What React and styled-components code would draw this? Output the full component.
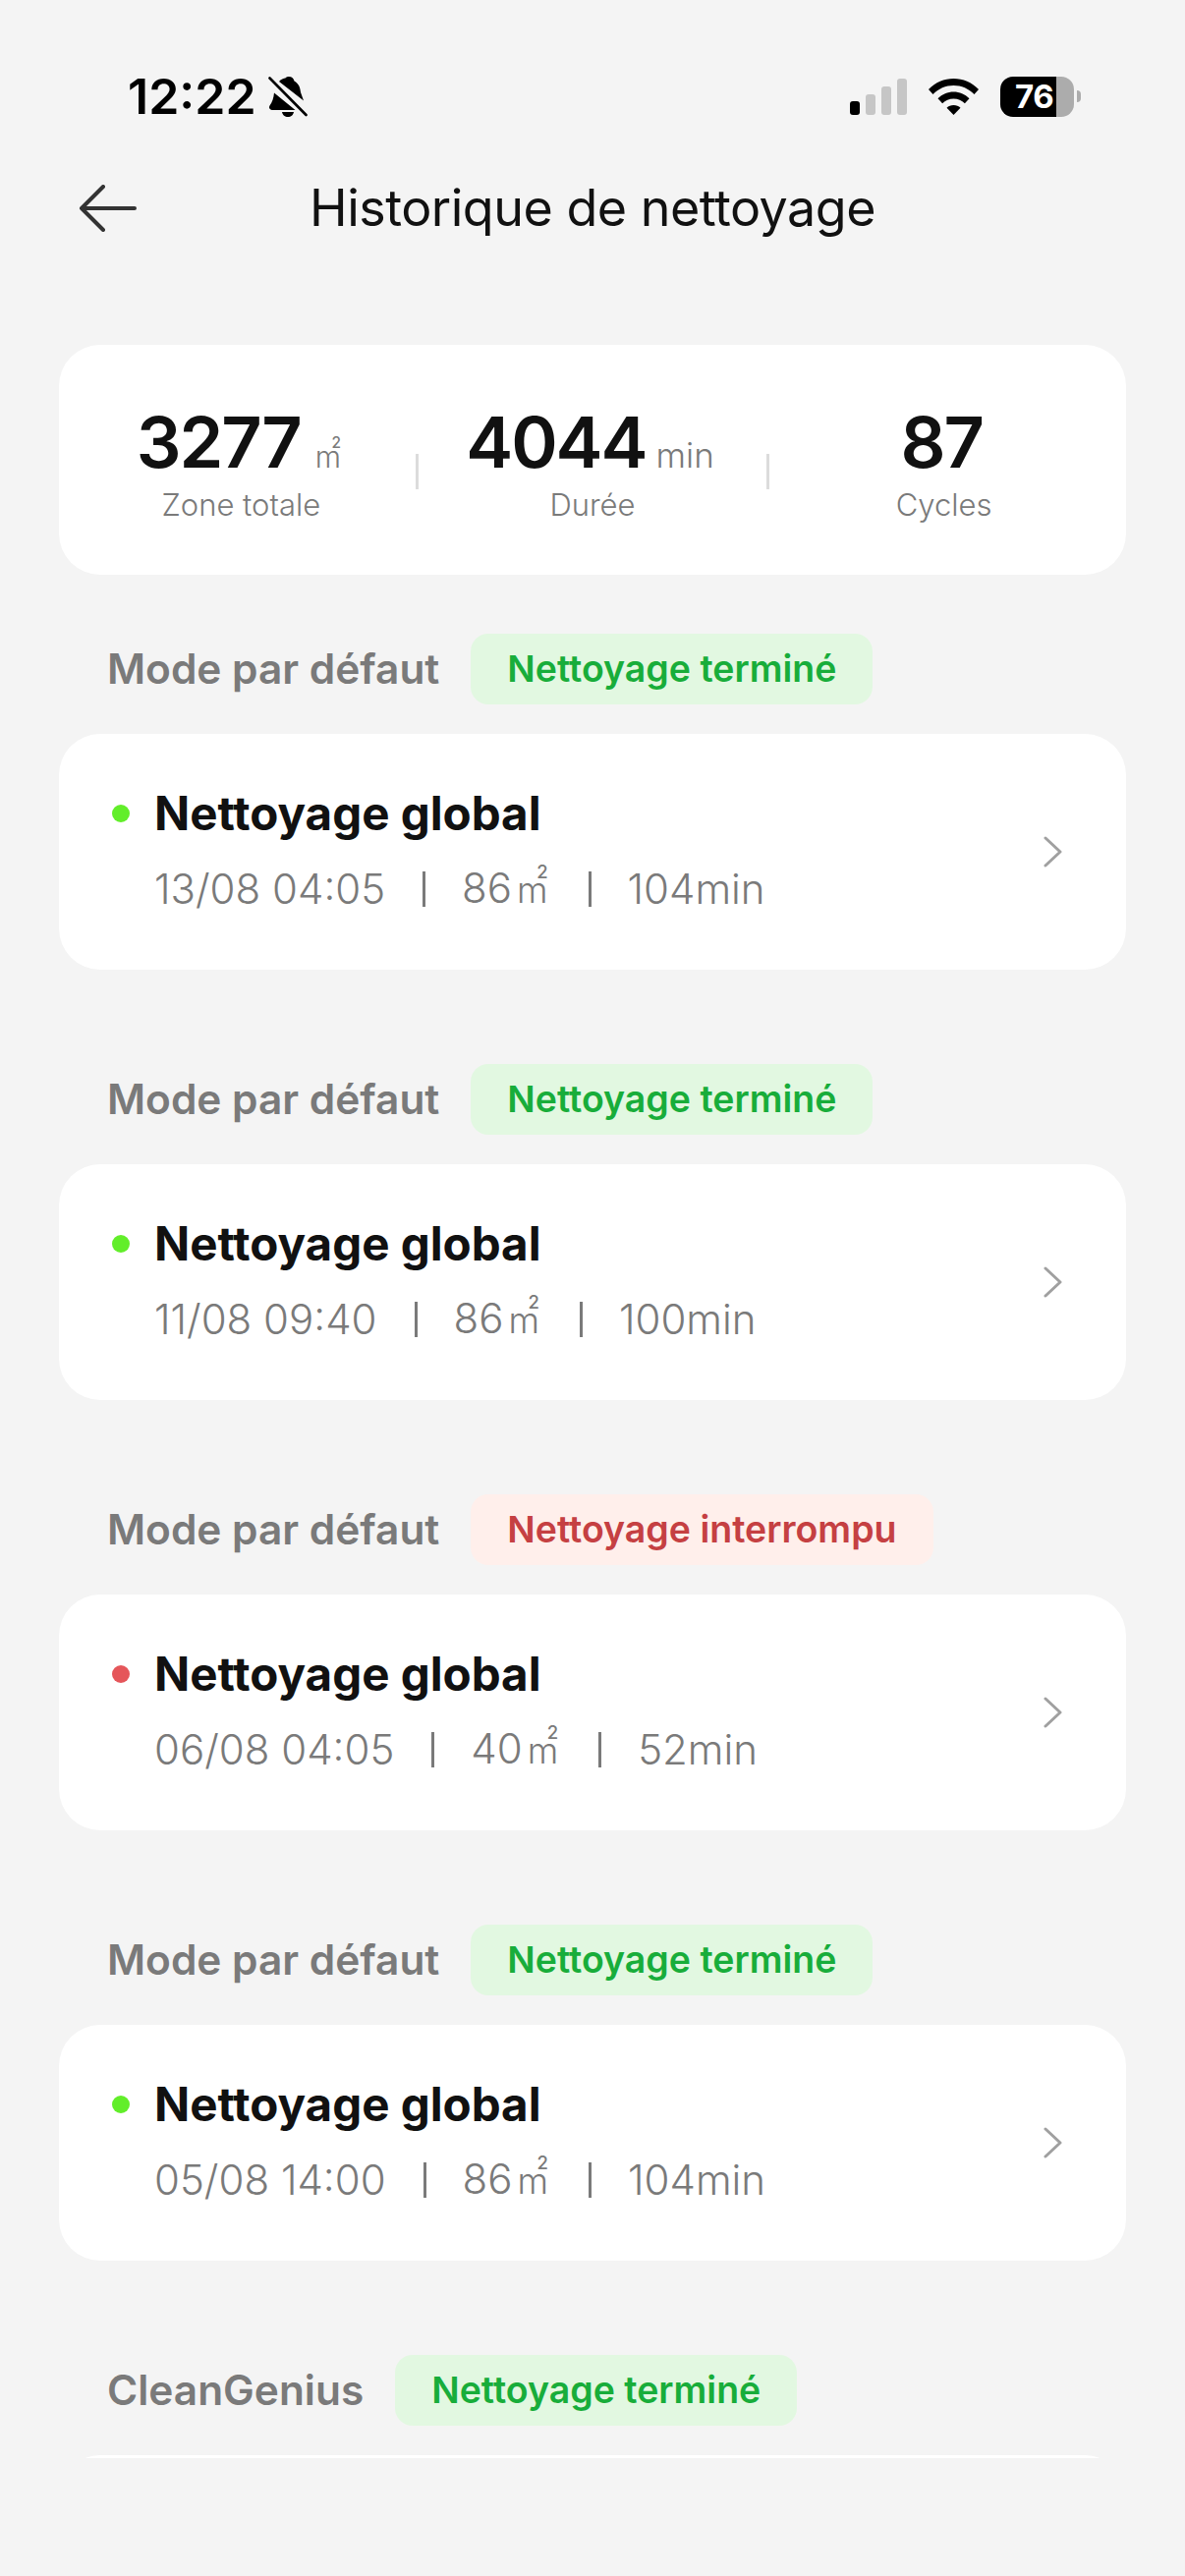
import styled, { createGlobalStyle } from "styled-components";

const GlobalStyle = createGlobalStyle`
  html, body {
    margin: 0;
    padding: 0;
    background: #f4f4f4;
  }
  body {
    font-family: Inter, "Noto Sans", sans-serif;
    color: #111111;
  }
`;

const Page = styled.div`
  width: 1206px;
  height: 2622px;
  overflow: hidden;
  display: flex;
  flex-direction: column;
  padding-top: 70px;
  box-sizing: border-box;
`;

const StatusBar = styled.div`
  height: 56px;
  display: flex;
  align-items: center;
  justify-content: space-between;
  padding: 0 106px 0 130px;
`;

const StatusLeft = styled.div`
  display: flex;
  align-items: center;
  gap: 12px;
`;

const StatusRight = styled.div`
  display: flex;
  align-items: center;
`;

const Time = styled.span`
  font-size: 50px;
  font-weight: 600;
  line-height: 56px;
  color: #000;
`;

const Signal = styled.div`
  display: flex;
  align-items: flex-end;
  gap: 6px;
  height: 37px;
  margin-right: 22px;
`;

const SignalBar = styled.i`
  width: 10px;
  height: ${(p) => p.$h}px;
  border-radius: 3px;
  background: ${(p) => (p.$on ? "#000" : "#c6c6c6")};
`;

const Battery = styled.div`
  width: 75px;
  height: 41px;
  margin-left: 22px;
  border-radius: 13px;
  background: linear-gradient(
    to right,
    #000 ${(p) => p.$level}%,
    #acacac ${(p) => p.$level}%
  );
  color: #fff;
  font-size: 33px;
  font-weight: 700;
  line-height: 41px;
  padding-left: 15px;
  box-sizing: border-box;
  letter-spacing: -0.5px;
`;

const BatteryCap = styled.i`
  width: 4px;
  height: 12px;
  margin-left: 3px;
  border-radius: 0 4px 4px 0;
  background: #acacac;
`;

const Header = styled.header`
  height: 100px;
  margin-top: 36px;
  display: grid;
  grid-template-columns: 1fr auto 1fr;
  align-items: center;
  padding-left: 80px;
  padding-right: 80px;
`;

const Title = styled.h1`
  margin: 0;
  font-size: 52px;
  font-weight: 400;
  line-height: 60px;
  letter-spacing: -0.5px;
  color: #111;
`;

const StatsCard = styled.section`
  margin: 89px 60px 0;
  height: 234px;
  background: #fff;
  border-radius: 42px;
  display: flex;
  align-items: center;
  padding: 0 8px;
  box-sizing: border-box;
`;

const Stat = styled.div`
  flex: 1;
  display: flex;
  flex-direction: column;
  align-items: center;
  gap: 4px;
  padding-top: 2px;
`;

const StatValue = styled.div`
  font-size: 72px;
  font-weight: 600;
  line-height: 86px;
  letter-spacing: -2px;
  display: flex;
  align-items: baseline;
  gap: 10px;
  padding-right: 5px;
  color: #111;
`;

const StatUnit = styled.span`
  font-size: 35px;
  font-weight: 300;
  line-height: 1;
  letter-spacing: 0;
  color: #7a7a7a;
`;

const StatLabel = styled.div`
  font-size: 31px;
  line-height: 34px;
  font-weight: 300;
  color: #7a7a7a;
`;

const StatDivider = styled.i`
  width: 3px;
  height: 36px;
  margin-top: 24px;
  background: #dcdcdc;
`;

const Metre = styled.span`
  font-size: 0.86em;
  margin-left: 5px;
`;

// small 2 set over the right end of the m
const Squared = styled.span`
  position: relative;
  top: -1.3em;
  margin-left: -0.62em;
  font-size: 0.44em;
  font-weight: 500;
  line-height: 0;
`;

const Section = styled.section`
  margin-top: ${(p) => p.$gap}px;
`;

const SectionHead = styled.div`
  height: 72px;
  padding-left: 109px;
  display: flex;
  align-items: center;
  gap: 32px;
`;

const Mode = styled.span`
  font-size: 42.4px;
  font-weight: 600;
  color: #7a7a7a;
  padding-bottom: 2px;
`;

const Badge = styled.span`
  height: 72px;
  padding: 0 37px 2px;
  box-sizing: border-box;
  border-radius: 18px;
  display: flex;
  align-items: center;
  font-size: 37.5px;
  font-weight: 600;
  color: ${(p) => (p.$failed ? "#c54042" : "#18ad3a")};
  background: ${(p) => (p.$failed ? "#ffefeb" : "#e2f8e1")};
`;

const Card = styled.div`
  margin: 30px 60px 0;
  height: 240px;
  background: #fff;
  border-radius: 42px;
  display: flex;
  align-items: center;
  justify-content: space-between;
  padding: 0 64px 0 54px;
  box-sizing: border-box;
`;

// the list scrolls under the bottom edge, only the top of the next card shows
const ListEnd = styled.div`
  height: 33px;
  overflow: hidden;
`;

const CardBody = styled.div`
  display: flex;
  flex-direction: column;
  gap: 22px;
  padding-bottom: 5px;
`;

const CardTitle = styled.div`
  display: flex;
  align-items: center;
  gap: 25px;
  font-size: 47.5px;
  font-weight: 700;
  line-height: 58px;
  color: #111;
`;

const Dot = styled.i`
  width: 18px;
  height: 18px;
  border-radius: 50%;
  background: ${(p) => (p.$failed ? "#e5565a" : "#62ee2a")};
`;

const CardMeta = styled.div`
  display: flex;
  align-items: center;
  margin-left: 43px;
  font-size: 42px;
  font-weight: 300;
  line-height: 50px;
  color: #7a7a7a;
`;

const MetaSep = styled.i`
  width: 3px;
  height: 36px;
  margin: 0 37px 0 38px;
  background: #7a7a7a;
`;

const AreaValue = styled.span`
  padding-right: 3px;
`;

const BellOff = () => (
  <svg width="40" height="42" viewBox="0 0 40 42">
    <path
      d="M21 1c3 0 5 2 5.500 4.500C31 8 32.500 12 33 17l3 8.500L11 6c1.500-2 5-3.500 6.500-3.500C18 1.500 19.500 1 21 1Z"
      fill="#000"
    />
    <path
      d="M6 17.500 27.500 35H5c-3 0-5-2-3.500-4.500C4 27 5.500 23 6 17.500Z"
      fill="#000"
    />
    <path d="M14 37h12c-.5 3-3 5-6 5s-5.500-2-6-5Z" fill="#000" />
    <path
      d="M1.500 2.500 38.500 40"
      stroke="#000"
      strokeWidth="2.600"
      strokeLinecap="round"
    />
  </svg>
);

const Wifi = () => (
  <svg width="51" height="37" viewBox="0 0 51 37">
    <path
      d="M25.500 0C35 0 44 3.800 51 11l-4.500 5C41 10.300 33.500 7 25.500 7S10 10.300 4.500 16L0 11C7 3.800 16 0 25.500 0Z"
      fill="#000"
    />
    <path
      d="M25.500 13.500c6 0 11.500 2.400 16 6.700l-4.600 5c-3-3-7-4.700-11.400-4.700s-8.400 1.700-11.400 4.700l-4.600-5c4.500-4.300 10-6.700 16-6.700Z"
      fill="#000"
    />
    <path
      d="M25.500 27c2.700 0 5.200 1 7 2.800L25.500 37l-7-7.200c1.800-1.800 4.300-2.800 7-2.800Z"
      fill="#000"
    />
  </svg>
);

const BackArrow = () => (
  <svg width="60" height="48" viewBox="0 0 60 48" fill="none">
    <path
      d="M57 24H3M25 2 3 24l22 22"
      stroke="#333"
      strokeWidth="4"
      strokeLinecap="round"
      strokeLinejoin="round"
    />
  </svg>
);

const Chevron = () => (
  <svg width="22" height="32" viewBox="0 0 22 32" fill="none">
    <path
      d="M4 2 19 16 4 30"
      stroke="#a0a0a0"
      strokeWidth="3"
      strokeLinecap="round"
      strokeLinejoin="round"
    />
  </svg>
);

const Area = ({ value }) => (
  <AreaValue>
    {value}
    <Metre>m</Metre>
    <Squared>2</Squared>
  </AreaValue>
);

const cleanings = [
  { date: "13/08 04:05", area: 86, duration: 104 },
  { date: "11/08 09:40", area: 86, duration: 100 },
  { date: "06/08 04:05", area: 40, duration: 52, failed: true },
  { date: "05/08 14:00", area: 86, duration: 104 },
];

function SessionHead({ mode, failed }) {
  return (
    <SectionHead>
      <Mode>{mode}</Mode>
      <Badge $failed={failed}>
        {failed ? "Nettoyage interrompu" : "Nettoyage terminé"}
      </Badge>
    </SectionHead>
  );
}

export default function App() {
  return (
    <>
      <GlobalStyle />
      <Page>
        <StatusBar>
          <StatusLeft>
            <Time>12:22</Time>
            <BellOff />
          </StatusLeft>
          <StatusRight>
            <Signal>
              <SignalBar $h={14} $on />
              <SignalBar $h={21} />
              <SignalBar $h={29} />
              <SignalBar $h={37} />
            </Signal>
            <Wifi />
            <Battery $level={76}>76</Battery>
            <BatteryCap />
          </StatusRight>
        </StatusBar>

        <Header>
          <BackArrow />
          <Title>Historique de nettoyage</Title>
        </Header>

        <StatsCard>
          <Stat>
            <StatValue>
              3277
              <StatUnit>
                <Metre>m</Metre>
                <Squared>2</Squared>
              </StatUnit>
            </StatValue>
            <StatLabel>Zone totale</StatLabel>
          </Stat>
          <StatDivider />
          <Stat>
            <StatValue>
              4044
              <StatUnit>min</StatUnit>
            </StatValue>
            <StatLabel>Durée</StatLabel>
          </Stat>
          <StatDivider />
          <Stat>
            <StatValue>87</StatValue>
            <StatLabel>Cycles</StatLabel>
          </Stat>
        </StatsCard>

        {cleanings.map((c, i) => (
          <Section key={c.date} $gap={i === 0 ? 60 : 96}>
            <SessionHead mode="Mode par défaut" failed={c.failed} />
            <Card>
              <CardBody>
                <CardTitle>
                  <Dot $failed={c.failed} />
                  Nettoyage global
                </CardTitle>
                <CardMeta>
                  {c.date}
                  <MetaSep />
                  <Area value={c.area} />
                  <MetaSep />
                  {c.duration}min
                </CardMeta>
              </CardBody>
              <Chevron />
            </Card>
          </Section>
        ))}

        <Section $gap={96}>
          <SessionHead mode="CleanGenius" />
          <ListEnd>
            <Card />
          </ListEnd>
        </Section>
      </Page>
    </>
  );
}
